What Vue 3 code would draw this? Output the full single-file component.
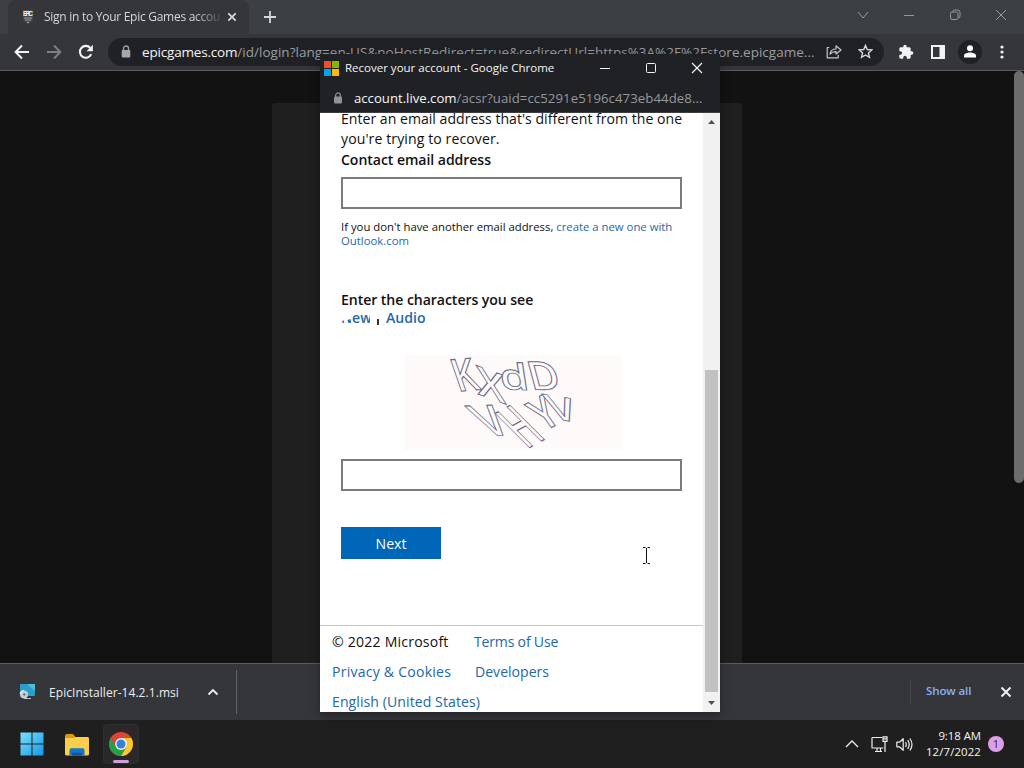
<script setup>
const captchaGlyphs = [
  { ch: 'K', m: 'matrix(0.92 -0.08 0.38 1.1 458 391.5)' },
  { ch: 'X', m: 'matrix(1.14 0.42 0.1 1.02 478 394)' },
  { ch: 'd', m: 'matrix(1.16 0.05 0.14 0.9 501.5 389)' },
  { ch: 'D', m: 'matrix(1.06 0.02 0.26 0.98 531.5 389.5)' },
  { ch: 'V', m: 'matrix(1.1 -0.04 0.77 1.05 486.500 436)' },
  { ch: 'H', m: 'matrix(0.66 -0.36 1.2 1.2 527 449)' },
  { ch: 'Y', m: 'matrix(0.82 -0.46 0.68 0.95 543.5 432)' },
  { ch: 'V', m: 'matrix(1.15 0.18 0.36 0.86 552 418.5)' }
]
</script>

<template>
  <div class="desktop">
    <header class="tabstrip">
      <div class="tab">
        <svg class="epic" width="12" height="14" viewBox="0 0 12 14"><path d="M1 0h10v10.8L6 13.5 1 10.800z" fill="#45474a" /><text x="6" y="6.200" text-anchor="middle" textLength="10">EPIC</text><path d="M2 8h8M3 10h6" stroke="#b5b6b8" stroke-width=".8" /><path d="M4.500 12h3L6 13.500z" fill="#aaa" /></svg>
        <span class="tab-title">Sign in to Your Epic Games accou</span>
        <svg class="tab-x" width="10" height="10" viewBox="0 0 10 10"><path d="M1.300 1.300l7.400 7.400M8.700 1.300L1.300 8.700" stroke="#d8dadc" stroke-width="1.700" /></svg>
      </div>
      <svg class="plus" width="12" height="12" viewBox="0 0 12 12"><path d="M6 0v12M0 6h12" stroke="#d5d7d9" stroke-width="1.800" /></svg>
      <div class="caption">
        <svg width="12" height="12" viewBox="0 0 12 12"><path d="M1 3l5 6 5-6" /></svg>
        <svg width="12" height="12" viewBox="0 0 12 12"><path d="M1 6.500h10" /></svg>
        <svg width="12" height="12" viewBox="0 0 12 12"><rect x="1.500" y="3" width="7.500" height="7.500" rx="1.500" /><path d="M3.500 2.500Q3.800 1 5.500 1H8.500a2.500 2.500 0 0 1 2.500 2.500V7q0 1.500-1.500 2" /></svg>
        <svg width="12" height="12" viewBox="0 0 12 12"><path d="M1 1l10 10M11 1L1 11" /></svg>
      </div>
    </header>

    <nav class="toolbar">
      <svg class="nav-back" width="16" height="16" viewBox="0 0 16 16"><path d="M15 8H2M8 1.500L1.600 8 8 14.500" fill="none" stroke="#f1f3f4" stroke-width="2" /></svg>
      <svg class="nav-fwd" width="16" height="16" viewBox="0 0 16 16"><path d="M1 8h13M8 1.500L14.400 8 8 14.500" fill="none" stroke="#7d7f83" stroke-width="1.900" /></svg>
      <svg class="nav-load" width="16" height="16" viewBox="0 0 16 16"><path d="M13.200 10.200A5.900 5.900 0 1 1 12.300 4" fill="none" stroke="#f1f3f4" stroke-width="2.100" /><path d="M14.900 .8v6.400H8.500z" fill="#f1f3f4" /></svg>
      <div class="omnibox">
        <svg class="lock" width="10" height="13" viewBox="0 0 10 13"><path d="M2.500 6V3.500a2.500 2.500 0 0 1 5 0V6" fill="none" stroke="#9b9da0" stroke-width="1.400" /><rect x=".7" y="5" width="8.600" height="7.500" rx="1" fill="#a5a7aa" /></svg>
        <span class="url"><b>epicgames.com</b><span>/id/login?lang=en-US&amp;noHostRedirect=true&amp;redirectUrl=https%3A%2F%2Fstore.epicgame...</span></span>
        <svg class="share" width="16" height="15" viewBox="0 0 16 15"><path d="M3.200 3.500h-2v10.300h11v-3M4 10c.5-3.600 2.500-5 6-5V1.800L15 6l-5 4V7.600C7.500 7.500 5.600 8.200 4 10z" fill="none" stroke="#c4c6c9" stroke-width="1.200" stroke-linejoin="round" /></svg>
        <svg class="star" width="15" height="15" viewBox="0 0 16 16"><path d="M8 1.500l1.900 4.400 4.800.4-3.600 3.200 1.100 4.700L8 11.700l-4.200 2.500 1.100-4.700L1.300 6.300l4.800-.4z" fill="none" stroke="#d5d7da" stroke-width="1.500" /></svg>
      </div>
      <svg class="ext" width="16" height="16" viewBox="0 0 24 24"><path d="M20.500 11H19V7c0-1.100-.9-2-2-2h-4V3.500a2.500 2.500 0 0 0-5 0V5H4c-1.100 0-2 .9-2 2v3.800h1.500a2.700 2.700 0 0 1 0 5.400H2V20c0 1.100.9 2 2 2h3.800v-1.500a2.700 2.700 0 0 1 5.400 0V22H17c1.100 0 2-.9 2-2v-4h1.500a2.500 2.500 0 0 0 0-5z" fill="#f1f3f4" /></svg>
      <svg class="panel" width="14" height="14" viewBox="0 0 14 14"><path d="M0 0h14v14H0zM2 2v10h6.500V2z" fill="#f1f3f4" fill-rule="evenodd" /></svg>
      <div class="avatar"><svg width="14" height="13" viewBox="0 0 14 13"><circle cx="7" cy="3.200" r="3" fill="#fff" /><path d="M1 12.500v-2c0-2 3.500-3 6-3s6 1 6 3v2z" fill="#fff" /></svg></div>
      <svg class="dots" width="4" height="14" viewBox="0 0 4 14"><g fill="#f1f3f4"><circle cx="2" cy="2" r="1.600" /><circle cx="2" cy="7" r="1.600" /><circle cx="2" cy="12" r="1.600" /></g></svg>
    </nav>

    <main class="page">
      <section class="card"></section>
      <div class="page-scroll"><i></i></div>
    </main>

    <section class="downloads">
      <svg class="msi" width="17" height="16" viewBox="0 0 17 16"><rect x="1" y="0" width="15" height="12" rx="1" fill="#2d9ccb" /><path d="M8 0h8v7z" fill="#4cbddf" /><path d="M5 14.500h7" stroke="#bbc6cc" stroke-width="1" /><circle cx="5" cy="10.500" r="4" fill="#c3ced8" /><circle cx="5.300" cy="10.500" r="1.100" fill="#41566b" /><path d="M1 10a4 4 0 0 1 4-3.500" stroke="#fff" fill="none" /></svg>
      <span class="file">EpicInstaller-14.2.1.msi</span>
      <svg class="dl-up" width="12" height="8" viewBox="0 0 12 8"><path d="M1.500 6.500L6 2l4.500 4.500" fill="none" stroke="#e8eaed" stroke-width="1.900" /></svg>
      <i class="rule"></i>
      <i class="edge"></i>
      <span class="show">Show all</span>
      <svg class="dl-x" width="12" height="12" viewBox="0 0 12 12"><path d="M1.500 1.500l9 9M10.500 1.500l-9 9" stroke="#f1f3f4" stroke-width="1.900" /></svg>
    </section>

    <footer class="taskbar">
      <svg class="win" width="24" height="24" viewBox="0 0 24 24"><defs><linearGradient id="wg" x1="0" y1="0" x2="1" y2="1"><stop offset="0" stop-color="#79e2fb" /><stop offset="1" stop-color="#1497ea" /></linearGradient></defs><path d="M.5.500h11v11H.5zM12.500.500h11v11h-11zM.5 12.500h11v11H.5zM12.500 12.500h11v11h-11z" fill="url(#wg)" /></svg>
      <svg class="folder" width="26" height="24" viewBox="0 0 26 24"><path d="M1 3q0-2 2-2h6l2.500 3H23q2 0 2 2v5H1z" fill="#d79a18" /><path d="M1 5h9l2-1h11.500Q25 4 25 6v15q0 1.500-1.500 1.500h-21Q1 22.500 1 21z" fill="#fbcf4b" /><path d="M5.500 22.500V17q0-1.800 1.800-1.800h11.400q1.800 0 1.800 1.800v5.500z" fill="#1576c6" /><path d="M8 22.500v-1.700q0-1 1-1h8q1 0 1 1v1.700z" fill="#0b5596" /></svg>
      <div class="chrome-slot">
        <svg width="24" height="24" viewBox="0 0 24 24"><circle cx="12" cy="12" r="12" fill="#dc4437" /><path d="M22.390 6H12v6l5.200 3L12 24A12 12 0 0 0 22.390 6z" fill="#fbc92e" /><path d="M12 24l5.200-9L12 12l-5.200 3L1.610 6A12 12 0 0 0 12 24z" fill="#26a046" /><circle cx="12" cy="12" r="5.900" fill="#f4f7fc" /><circle cx="12" cy="12" r="4.500" fill="#347fe0" /></svg>
        <i></i>
      </div>
      <svg class="tray-up" width="14" height="8" viewBox="0 0 14 8"><path d="M1 7l6-6 6 6" fill="none" stroke="#eee" stroke-width="1.300" /></svg>
      <svg class="tray-net" width="17" height="17" viewBox="0 0 17 17"><path d="M11 1.500H1.600q-.6 0-.6.600v9.300q0 .6.600.600H12.500M4 15.500h7M6 12v3.500M9.500 12v3.500" fill="none" stroke="#eee" stroke-width="1.200" /><path d="M12 .8h4v4.500h-4zM14 5.300V16M12 2.800h4" fill="none" stroke="#eee" stroke-width="1.200" /></svg>
      <svg class="tray-vol" width="17" height="15" viewBox="0 0 17 15"><path d="M.8 5.200h2.700l3.700-3.500v11.600L3.500 9.800H.8z" fill="none" stroke="#eee" stroke-width="1.200" stroke-linejoin="round" /><path d="M9.500 5q1.500 2.500 0 5M11.700 3.200q3 4.300 0 8.600M13.900 1.500q4.200 6 0 12" fill="none" stroke="#eee" stroke-width="1.200" /></svg>
      <div class="clock"><span>9:18 AM</span><span class="date">12/7/2022</span></div>
      <span class="badge">1</span>
    </footer>

    <div class="popup">
      <div class="p-title">
        <svg width="15" height="15" viewBox="0 0 15 15"><path d="M0 0h7v7H0z" fill="#f25022" /><path d="M8 0h7v7H8z" fill="#7fba00" /><path d="M0 8h7v7H0z" fill="#00a4ef" /><path d="M8 8h7v7H8z" fill="#ffb900" /></svg>
        <span>Recover your account - Google Chrome</span>
        <svg class="p-min" width="10" height="10" viewBox="0 0 10 10"><path d="M0 5.500h10" /></svg>
        <svg class="p-max" width="10" height="10" viewBox="0 0 10 10"><rect x=".5" y=".5" width="9" height="9" rx="1" /></svg>
        <svg class="p-close" width="12" height="12" viewBox="0 0 12 12"><path d="M1 1l10 10M11 1L1 11" /></svg>
      </div>
      <div class="p-url">
        <svg width="10" height="12" viewBox="0 0 10 13"><path d="M2.500 6V3.500a2.500 2.500 0 0 1 5 0V6" fill="none" stroke="#8b8d90" stroke-width="1.400" /><rect x=".7" y="5" width="8.600" height="7.500" rx="1" fill="#909295" /></svg>
        <b>account.live.com</b><span>/acsr?uaid=cc5291e5196c473eb44de8...</span>
      </div>
      <div class="p-body">
        <div class="content">
          <div class="form">
            <p class="intro">Enter an email address that's different from the one<br><span>you're trying to recover.</span></p>
            <label class="lab">Contact email address</label>
            <div class="input"></div>
            <p class="help">If you don't have another email address, <a>create a new one with<br>Outlook.com</a></p>
            <label class="lab chars">Enter the characters you see</label>
            <div class="alts"><a class="new">New</a><i class="pipe"></i><a>Audio</a></div>
            <div class="captcha">
              <svg width="217" height="95" viewBox="405 355 217 95">
                <text v-for="(g, i) in captchaGlyphs" :key="i" :transform="g.m">{{ g.ch }}</text>
              </svg>
            </div>
            <div class="input"></div>
            <button class="next">Next</button>
          </div>
          <div class="foot">
            <div><span class="f1">© 2022 Microsoft</span><a class="f2">Terms of Use</a></div>
            <div><a class="f3">Privacy &amp; Cookies</a><a class="f4">Developers</a></div>
            <div><a class="f5">English (United States)</a></div>
          </div>
        </div>
        <div class="scroll">
          <svg class="s-up" width="7" height="4" viewBox="0 0 7 4"><path d="M0 4L3.500 0 7 4z" fill="#505050" /></svg>
          <i></i>
          <svg class="s-down" width="7" height="4" viewBox="0 0 7 4"><path d="M0 0l3.500 4L7 0z" fill="#505050" /></svg>
        </div>
      </div>
    </div>

    <svg class="cursor" width="9" height="17" viewBox="0 0 9 17"><path d="M1 .5h2.500M5.500.500H8M4.500 1v15M1 16.500h2.500M5.500 16.500H8" stroke="#111" stroke-width="1" fill="none" /></svg>
  </div>
</template>

<style>
body { margin: 0; background: #121212; overflow: hidden; }
</style>

<style scoped>
* { box-sizing: border-box; }
.desktop { position: relative; width: 1024px; height: 768px; overflow: hidden; display: flex; flex-direction: column; font-family: "Open Sans", "Noto Sans", sans-serif; }
svg, i { display: block; flex: none; }
span, a, b { white-space: nowrap; }
b { font-weight: 400; }
p { margin: 0; }

.tabstrip { height: 34px; background: #3c4043; display: flex; align-items: center; padding-left: 8px; }
.tab { width: 241px; height: 34px; background: #35363a; border-radius: 8px 8px 0 0; display: flex; align-items: center; padding-left: 14px; }
.epic text { font: 700 6.500px "Liberation Sans", sans-serif; fill: #f0f0f0; }
.tab-title { width: 177px; margin-left: 10px; color: #d4d6d8; font-size: 12px; line-height: 18px; letter-spacing: -.27px; -webkit-mask-image: linear-gradient(90deg, #000 150px, transparent 180px); mask-image: linear-gradient(90deg, #000 150px, transparent 180px); }
.tab-x { margin-left: 6px; }
.plus { margin-left: 15px; }
.caption { margin-left: auto; display: flex; gap: 34px; padding: 0 17px 5px 0; }
.caption svg { fill: none; stroke: #94989a; stroke-width: 1; }

.toolbar { height: 37px; background: #35363a; border-bottom: 1px solid #5a5c5f; display: flex; align-items: center; padding: 0 20px 1px 14px; }
.nav-fwd { margin-left: 16px; }
.nav-load { margin-left: 16px; }
.omnibox { width: 776px; height: 28px; margin-left: 14px; border-radius: 14px; background: #202124; display: flex; align-items: center; padding-left: 13px; }
.url { display: flex; margin-left: 11px; font-size: 13.500px; line-height: 20px; color: #9a9da1; letter-spacing: .02px; width: 674px; }
.url b { color: #f3f4f5; letter-spacing: -.18px; }
.share { margin-left: 10px; }
.star { margin-left: 16px; }
.ext { margin-left: 14px; }
.panel { margin-left: 17px; }
.avatar { width: 24px; height: 24px; margin-left: 13px; border-radius: 50%; background: #202124; display: flex; align-items: center; justify-content: center; }
.dots { margin-left: 18px; }

.page { height: 592px; background: #121212; display: flex; padding: 32px 0 0 272px; }
.card { width: 470px; height: 560px; background: #1f1f1f; border-radius: 4px 4px 0 0; }
.page-scroll { margin: -32px 0 0 272px; width: 10px; }
.page-scroll i { height: 412px; background: #6c6c6d; border-radius: 5px; }

.downloads { height: 57px; background: #35363a; border-top: 1px solid #5a5c5f; display: flex; align-items: center; padding-left: 19px; }
.file { width: 132px; margin-left: 13px; font-size: 12px; letter-spacing: .06px; color: #eceded; }
.dl-up { margin-left: 26px; }
.rule { width: 1px; height: 44px; margin-left: 17px; background: #626569; }
.edge { width: 1px; height: 24px; margin-left: 673px; background: #43464a; }
.show { width: 45px; margin-left: 15px; font-size: 11.500px; font-weight: 600; letter-spacing: -.1px; color: #8ab0f3; padding-bottom: 3px; }
.dl-x { margin-left: 29px; }

.taskbar { height: 48px; background: #1f1f1f; display: flex; align-items: center; padding-left: 20px; }
.folder { margin: 2px 0 0 20px; }
.chrome-slot { width: 36px; height: 40px; margin-left: 13px; border-radius: 4px; background: #2a2828; border: 1px solid #302f2f; display: flex; flex-direction: column; align-items: center; padding-top: 7px; }
.chrome-slot i { width: 16px; height: 3px; margin-top: 4px; border-radius: 2px; background: #cda0dc; }
.tray-up { margin-left: 706px; }
.tray-net { margin-left: 12px; }
.tray-vol { margin-left: 8px; }
.clock { width: 68px; display: flex; flex-direction: column; align-items: flex-end; font-size: 11.400px; line-height: 16px; letter-spacing: -.05px; color: #f4f4f4; padding-bottom: 1px; }
.date { letter-spacing: .12px; }
.badge { width: 16px; height: 16px; margin-left: 7px; border-radius: 50%; background: #dda0e8; color: #37213c; font-size: 11px; line-height: 16px; text-align: center; }

.popup { position: absolute; left: 320px; top: 54px; width: 400px; height: 658px; background: #202124; box-shadow: 0 3px 10px rgba(0, 0, 0, .35); display: flex; flex-direction: column; }
.p-title { height: 29px; display: flex; align-items: center; padding: 0 0 1px 4px; color: #f5f5f5; }
.p-title span { width: 212px; margin-left: 6px; font-size: 11.500px; line-height: 16px; }
.p-title .p-min, .p-title .p-max, .p-title .p-close { fill: none; stroke: #f4f4f4; stroke-width: 1; }
.p-min { margin-left: 43px; }
.p-max { margin-left: 36px; }
.p-title .p-close { margin-left: 35px; stroke-width: 1.200; }
.p-url { height: 30px; display: flex; align-items: center; padding-left: 13px; border-bottom: 1px solid #3c3e41; font-size: 13.200px; line-height: 20px; color: #95989c; letter-spacing: .07px; }
.p-url b { margin-left: 11px; color: #f5f5f5; letter-spacing: -.02px; }
.p-body { flex: 1; min-height: 0; display: flex; background: #fff; }
.content { width: 383px; overflow: hidden; color: #111; }
.form { padding: 0 21px; margin-top: -4px; height: 516px; display: flex; flex-direction: column; }
.intro { font-size: 14.080px; line-height: 20px; white-space: nowrap; letter-spacing: .01px; }
.intro span { letter-spacing: .09px; }
.lab { margin-top: 1px; font-size: 14.080px; font-weight: 600; line-height: 20px; letter-spacing: -.06px; }
.input { width: 341px; height: 32px; flex: none; border: 2px solid #7b7b7b; background: #fff; }
.lab + .input { margin-top: 7px; }
.help { margin-top: 11px; font-size: 11.340px; line-height: 14px; }
a { color: #2468a8; }
.chars { margin-top: 42px; }
.alts { height: 18px; margin-top: -1px; display: flex; align-items: center; font-size: 14.080px; font-weight: 600; line-height: 18px; }
.new { width: 31px; clip-path: polygon(0 64%, 7px 64%, 7px 57%, 10px 57%, 10px 0, 29px 30%, 29px 100%, 0 100%); }
.pipe { width: 2px; height: 6px; margin: 8px 7px 0 5px; background: #333; }
.captcha { margin: 28px 0 9px 64px; width: 217px; height: 95px; background: #fffafa; }
.captcha text { font: 600 40px "Open Sans", sans-serif; fill: #fffbfc; stroke: #666984; stroke-width: 1; vector-effect: non-scaling-stroke; }
.next { width: 100px; height: 32px; flex: none; margin-top: 36px; border: 0; padding: 2px 0 0; background: #0067b8; color: #fff; font: 14.100px/30px "Open Sans", sans-serif; }
.foot { border-top: 1px solid #c4c8cb; padding: 1px 0 0 12px; font-size: 14.080px; line-height: 30px; }
.foot div { display: flex; height: 30px; }
.f1 { width: 142px; letter-spacing: .2px; }
.f2 { letter-spacing: -.2px; }
.f3 { width: 143px; letter-spacing: .22px; }
.f5 { letter-spacing: .07px; }
.scroll { width: 17px; background: #f1f1f1; display: flex; flex-direction: column; align-items: center; }
.s-up { margin: 7px 0 0; }
.scroll i { width: 13px; height: 322px; margin-top: 246px; background: #c1c1c1; }
.s-down { margin-top: 9px; }
.cursor { position: absolute; left: 642px; top: 547px; }
</style>
